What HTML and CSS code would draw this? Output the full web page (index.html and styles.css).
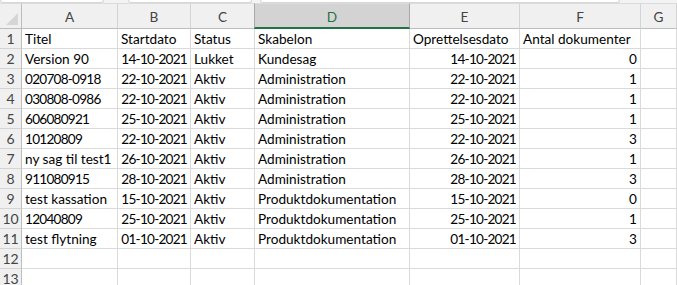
FILE: index.html
```html
<!DOCTYPE html>
<html lang="da">
<head>
    <meta charset="UTF-8">
    <meta name="viewport" content="width=device-width, initial-scale=1.0">
    <title>Sager</title>
    <link rel="stylesheet" href="styles.css">
</head>
<body>

    <div class="topbar">
        <div class="box box-name"></div>
        <div class="box box-mid"></div>
        <div class="box box-formula"></div>
    </div>

    <div class="sheet">
        <div class="corner"><span class="tri"></span></div>
        <div class="col">A</div>
        <div class="col">B</div>
        <div class="col">C</div>
        <div class="col col-active">D</div>
        <div class="col">E</div>
        <div class="col">F</div>
        <div class="col">G</div>

        <div class="rn">1</div>
        <div class="c">Titel</div>
        <div class="c">Startdato</div>
        <div class="c">Status</div>
        <div class="c">Skabelon</div>
        <div class="c">Oprettelsesdato</div>
        <div class="c">Antal dokumenter</div>
        <div class="c"></div>

        <div class="rn">2</div>
        <div class="c">Version 90</div>
        <div class="c r n">14-10-2021</div>
        <div class="c">Lukket</div>
        <div class="c">Kundesag</div>
        <div class="c r n">14-10-2021</div>
        <div class="c r">0</div>
        <div class="c"></div>

        <div class="rn">3</div>
        <div class="c n">020708-0918</div>
        <div class="c r n">22-10-2021</div>
        <div class="c">Aktiv</div>
        <div class="c">Administration</div>
        <div class="c r n">22-10-2021</div>
        <div class="c r">1</div>
        <div class="c"></div>

        <div class="rn">4</div>
        <div class="c n">030808-0986</div>
        <div class="c r n">22-10-2021</div>
        <div class="c">Aktiv</div>
        <div class="c">Administration</div>
        <div class="c r n">22-10-2021</div>
        <div class="c r">1</div>
        <div class="c"></div>

        <div class="rn">5</div>
        <div class="c n">606080921</div>
        <div class="c r n">25-10-2021</div>
        <div class="c">Aktiv</div>
        <div class="c">Administration</div>
        <div class="c r n">25-10-2021</div>
        <div class="c r">1</div>
        <div class="c"></div>

        <div class="rn">6</div>
        <div class="c n">10120809</div>
        <div class="c r n">22-10-2021</div>
        <div class="c">Aktiv</div>
        <div class="c">Administration</div>
        <div class="c r n">22-10-2021</div>
        <div class="c r">3</div>
        <div class="c"></div>

        <div class="rn">7</div>
        <div class="c">ny sag til test1</div>
        <div class="c r n">26-10-2021</div>
        <div class="c">Aktiv</div>
        <div class="c">Administration</div>
        <div class="c r n">26-10-2021</div>
        <div class="c r">1</div>
        <div class="c"></div>

        <div class="rn">8</div>
        <div class="c n">911080915</div>
        <div class="c r n">28-10-2021</div>
        <div class="c">Aktiv</div>
        <div class="c">Administration</div>
        <div class="c r n">28-10-2021</div>
        <div class="c r">3</div>
        <div class="c"></div>

        <div class="rn">9</div>
        <div class="c">test kassation</div>
        <div class="c r n">15-10-2021</div>
        <div class="c">Aktiv</div>
        <div class="c">Produktdokumentation</div>
        <div class="c r n">15-10-2021</div>
        <div class="c r">0</div>
        <div class="c"></div>

        <div class="rn">10</div>
        <div class="c n">12040809</div>
        <div class="c r n">25-10-2021</div>
        <div class="c">Aktiv</div>
        <div class="c">Produktdokumentation</div>
        <div class="c r n">25-10-2021</div>
        <div class="c r">1</div>
        <div class="c"></div>

        <div class="rn">11</div>
        <div class="c">test flytning</div>
        <div class="c r n">01-10-2021</div>
        <div class="c">Aktiv</div>
        <div class="c">Produktdokumentation</div>
        <div class="c r n">01-10-2021</div>
        <div class="c r">3</div>
        <div class="c"></div>

        <div class="rn">12</div>
        <div class="c"></div>
        <div class="c"></div>
        <div class="c"></div>
        <div class="c"></div>
        <div class="c"></div>
        <div class="c"></div>
        <div class="c"></div>

        <div class="rn">13</div>
        <div class="c"></div>
        <div class="c"></div>
        <div class="c"></div>
        <div class="c"></div>
        <div class="c"></div>
        <div class="c"></div>
        <div class="c"></div>
    </div>

</body>
</html>
```

FILE: styles.css
```css
body {
    margin: 0;
    background-color: #ffffff;
    font-family: Lato, "Liberation Sans", sans-serif;
    overflow: hidden;
}

.topbar {
    display: flex;
    height: 3px;
    background-color: #f3f3f3;
    overflow: hidden;
}

.box {
    height: 3px;
    background-color: #ffffff;
    border: 1px solid #d6d6d6;
    border-top: none;
    border-radius: 0 0 3px 3px;
    box-sizing: border-box;
}

.box-name {
    width: 104px;
}

.box-mid {
    width: 124px;
    margin-left: 24px;
}

.box-formula {
    width: 360px;
    margin-left: 8px;
}

.sheet {
    display: grid;
    grid-template-columns: 22px 96px 73px 64px 155px 110px 121px 36px;
    grid-template-rows: 26px;
    grid-auto-rows: 20px;
    font-size: 13.6px;
}

.sheet > div {
    box-sizing: border-box;
    white-space: nowrap;
    overflow: hidden;
}

.corner,
.col {
    background-color: #f0f0f0;
    border-top: 1px solid #dcdcdc;
    border-right: 1px solid #d4d4d4;
    border-bottom: 1px solid #bdbdbd;
}

.corner {
    position: relative;
    border-right-color: #bdbdbd;
}

.tri {
    position: absolute;
    right: 3px;
    bottom: 3px;
    width: 0;
    height: 0;
    border-left: 12px solid transparent;
    border-bottom: 12px solid #d5d5d5;
}

.col {
    color: #444444;
    text-align: center;
    padding-top: 3px;
    line-height: 20px;
}

.col-active {
    background-color: #d3d3d3;
    color: #217346;
    border-bottom: 2px solid #217346;
    border-left: 1px solid #a8a8a8;
    border-right-color: #a8a8a8;
    margin-left: -1px;
}

.rn {
    background-color: #f0f0f0;
    color: #444444;
    text-align: center;
    line-height: 20px;
    font-size: 14px;
    border-right: 1px solid #bdbdbd;
    border-bottom: 1px solid #d4d4d4;
}

.c {
    color: #000000;
    padding: 0 3px;
    line-height: 20px;
    border-right: 1px solid #dadada;
    border-bottom: 1px solid #dadada;
}

.r {
    text-align: right;
}

.n {
    letter-spacing: -0.75px;
}
```
